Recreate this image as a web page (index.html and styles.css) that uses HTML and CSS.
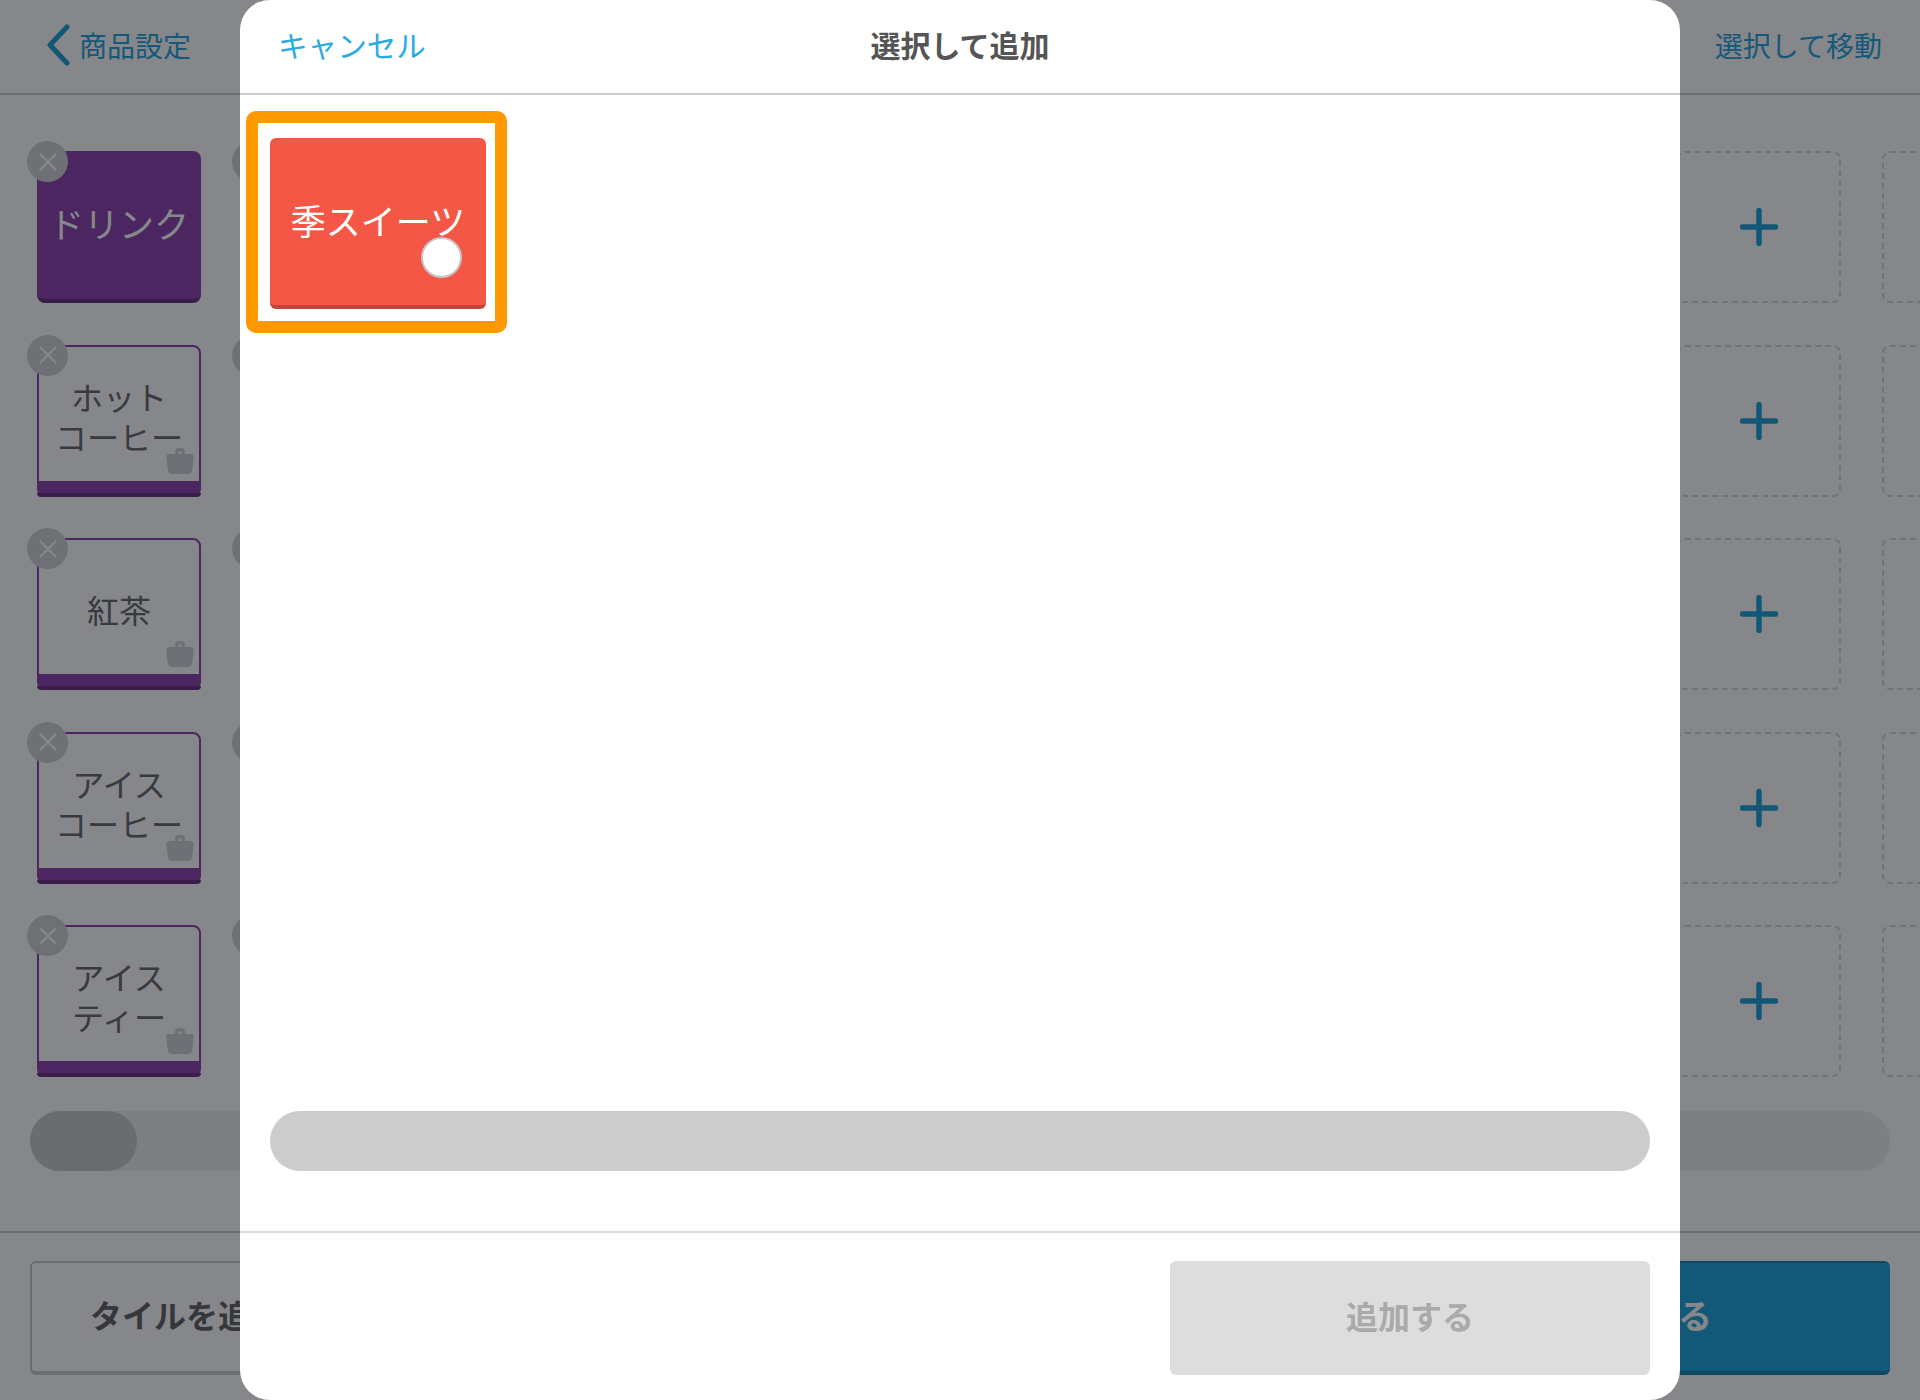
FILE: index.html
```html
<!DOCTYPE html>
<html lang="ja">
<head>
<meta charset="utf-8">
<title>選択して追加</title>
<link rel="stylesheet" href="styles.css">
</head>
<body>
<svg class="defs" width="0" height="0" aria-hidden="true">
  <symbol id="bag" viewBox="0 0 28 28">
    <path fill-rule="evenodd" d="M9 8V6a4 4 0 0 1 4-4h2a4 4 0 0 1 4 4v2h6.2c1.5 0 2.6 1.2 2.5 2.700L26.300 24c-.2 2.300-1.800 4-4.100 4H5.800c-2.300 0-3.900-1.700-4.100-4L.3 10.700C.2 9.200 1.300 8 2.800 8H9Zm3.300 0h3.400V6.500c0-.6-.4-1-1-1h-1.400c-.6 0-1 .4-1 1V8Z"/>
  </symbol>
  <symbol id="cross" viewBox="0 0 20 20">
    <path d="M2.500 2.500l15 15M17.500 2.500l-15 15" fill="none" stroke="currentColor" stroke-width="2.200" stroke-linecap="round"/>
  </symbol>
  <symbol id="plus" viewBox="0 0 38 38">
    <path d="M19 2.500v33M2.500 19h33" fill="none" stroke="currentColor" stroke-width="5.500" stroke-linecap="round"/>
  </symbol>
</svg>

<div class="app">
  <header class="top-bar">
    <a class="back">
      <svg class="chevron" viewBox="0 0 24 42"><path d="M21 3 4 21l17 18" fill="none" stroke="currentColor" stroke-width="5" stroke-linecap="round" stroke-linejoin="round"/></svg>
      <span>商品設定</span>
    </a>
    <a class="top-action">選択して移動</a>
  </header>

  <main class="tile-area">
    <div class="tile-row">
      <div class="tile tile-solid"><button class="delete"><svg class="x"><use href="#cross"/></svg></button><span class="label-large">ドリンク</span></div>
      <div class="tile"><button class="delete"><svg class="x"><use href="#cross"/></svg></button></div>
      <div class="slot"></div><div class="slot"></div><div class="slot"></div><div class="slot"></div><div class="slot"></div><div class="slot"></div>
      <div class="slot"><svg class="plus"><use href="#plus"/></svg></div>
      <div class="slot"><svg class="plus"><use href="#plus"/></svg></div>
    </div>
    <div class="tile-row">
      <div class="tile tile-outline"><button class="delete"><svg class="x"><use href="#cross"/></svg></button><span class="label">ホット<br>コーヒー</span><svg class="bag"><use href="#bag"/></svg></div>
      <div class="tile"><button class="delete"><svg class="x"><use href="#cross"/></svg></button></div>
      <div class="slot"></div><div class="slot"></div><div class="slot"></div><div class="slot"></div><div class="slot"></div><div class="slot"></div>
      <div class="slot"><svg class="plus"><use href="#plus"/></svg></div>
      <div class="slot"><svg class="plus"><use href="#plus"/></svg></div>
    </div>
    <div class="tile-row">
      <div class="tile tile-outline"><button class="delete"><svg class="x"><use href="#cross"/></svg></button><span class="label">紅茶</span><svg class="bag"><use href="#bag"/></svg></div>
      <div class="tile"><button class="delete"><svg class="x"><use href="#cross"/></svg></button></div>
      <div class="slot"></div><div class="slot"></div><div class="slot"></div><div class="slot"></div><div class="slot"></div><div class="slot"></div>
      <div class="slot"><svg class="plus"><use href="#plus"/></svg></div>
      <div class="slot"><svg class="plus"><use href="#plus"/></svg></div>
    </div>
    <div class="tile-row">
      <div class="tile tile-outline"><button class="delete"><svg class="x"><use href="#cross"/></svg></button><span class="label">アイス<br>コーヒー</span><svg class="bag"><use href="#bag"/></svg></div>
      <div class="tile"><button class="delete"><svg class="x"><use href="#cross"/></svg></button></div>
      <div class="slot"></div><div class="slot"></div><div class="slot"></div><div class="slot"></div><div class="slot"></div><div class="slot"></div>
      <div class="slot"><svg class="plus"><use href="#plus"/></svg></div>
      <div class="slot"><svg class="plus"><use href="#plus"/></svg></div>
    </div>
    <div class="tile-row">
      <div class="tile tile-outline"><button class="delete"><svg class="x"><use href="#cross"/></svg></button><span class="label">アイス<br>ティー</span><svg class="bag"><use href="#bag"/></svg></div>
      <div class="tile"><button class="delete"><svg class="x"><use href="#cross"/></svg></button></div>
      <div class="slot"></div><div class="slot"></div><div class="slot"></div><div class="slot"></div><div class="slot"></div><div class="slot"></div>
      <div class="slot"><svg class="plus"><use href="#plus"/></svg></div>
      <div class="slot"><svg class="plus"><use href="#plus"/></svg></div>
    </div>
  </main>

  <div class="page-scroll"><div class="page-thumb"></div></div>

  <footer class="page-footer">
    <button class="btn-outline">タイルを追加</button>
    <button class="btn-primary">保存する</button>
  </footer>

  <div class="overlay"></div>

  <section class="modal">
    <header class="modal-head">
      <a class="cancel">キャンセル</a>
      <h1 class="modal-title">選択して追加</h1>
    </header>
    <div class="modal-body">
      <div class="highlight">
        <div class="pick-tile">
          <span class="label-large">季スイーツ</span>
          <span class="radio"></span>
        </div>
      </div>
    </div>
    <div class="modal-scroll"></div>
    <footer class="modal-foot">
      <button class="btn-disabled">追加する</button>
    </footer>
  </section>
</div>
</body>
</html>
```
FILE: styles.css
```css
* { box-sizing: border-box; }

html, body {
  margin: 0;
  padding: 0;
  background: #fff;
}

body {
  font-family: "Noto Sans CJK JP", "Noto Sans", sans-serif;
  font-weight: 400;
  color: #666;
}

.defs { position: absolute; }

button {
  font-family: inherit;
  margin: 0;
  padding: 0;
}

.app {
  position: relative;
  width: 1920px;
  height: 1400px;
  overflow: hidden;
  background: #fff;
  display: flex;
  flex-direction: column;
}

/* page behind the dialog */
.top-bar {
  flex: none;
  height: 95px;
  border-bottom: 2px solid #ccc;
  display: flex;
  align-items: center;
  justify-content: space-between;
  padding: 0 38px 4px 46px;
  color: #2aa6dc;
  font-size: 28px;
}

.back {
  display: flex;
  align-items: center;
  gap: 9px;
}

.chevron {
  width: 24px;
  height: 42px;
  color: #22a3d9;
}

.tile-area {
  flex: none;
  padding: 56px 0 0 37px;
  display: flex;
  flex-direction: column;
  gap: 41.5px;
}

.tile-row {
  display: flex;
  gap: 41px;
}

.tile, .slot {
  flex: none;
  width: 164px;
  height: 152px;
  border-radius: 8px;
  position: relative;
  display: flex;
  align-items: center;
  justify-content: center;
  text-align: center;
}

.slot {
  border: 2px dashed #d8d8da;
  color: #24a3d9;
}

.tile {
  padding-bottom: 4px;
}

.tile-solid {
  background: #8e46ae;
  border-bottom: 4px solid #6f3589;
  color: #fff;
}

.tile-outline {
  border: 2px solid #8e46ae;
  border-bottom: 16px solid #8e46ae;
  padding: 4px 0 0;
}

.tile-outline::after {
  content: "";
  position: absolute;
  left: -2px;
  right: -2px;
  bottom: -16px;
  height: 4px;
  background: #6f3589;
  border-radius: 0 0 8px 8px;
}

.label {
  font-size: 32px;
  line-height: 40px;
  white-space: nowrap;
  color: #6a6b6f;
}

.label-large {
  font-size: 35px;
  line-height: 40px;
  white-space: nowrap;
}

.delete {
  position: absolute;
  left: -10px;
  top: -10px;
  width: 41px;
  height: 41px;
  border: 0;
  border-radius: 50%;
  background: #d4d4d6;
  color: #fff;
  display: flex;
  align-items: center;
  justify-content: center;
}

.tile-outline .delete {
  left: -12px;
  top: -12px;
}

.x {
  width: 20px;
  height: 20px;
}

.plus {
  width: 38px;
  height: 38px;
}

.bag {
  position: absolute;
  right: 5px;
  bottom: 7px;
  width: 28px;
  height: 28px;
  fill: #d4d4d6;
}

.page-scroll {
  flex: none;
  margin: 34px 30px 0;
  height: 60px;
  border-radius: 30px;
  background: #efeff0;
}

.page-thumb {
  width: 107px;
  height: 60px;
  border-radius: 30px;
  background: #ccc;
}

.page-footer {
  flex: none;
  margin-top: 60px;
  border-top: 2px solid #ccc;
  padding: 28px 30px 0;
  display: flex;
  justify-content: space-between;
}

.btn-outline, .btn-primary {
  height: 114px;
  border-radius: 6px;
  font-size: 32px;
  font-weight: 700;
  display: flex;
  align-items: center;
  justify-content: center;
  padding-bottom: 6px;
}

.btn-outline {
  width: 312px;
  background: #fff;
  color: #666;
  border: 2px solid #ccc;
  border-bottom-width: 4px;
}

.btn-primary {
  width: 492px;
  background: #23a5dc;
  color: #fff;
  border: 0;
  border-top: 2px solid #1a87b5;
  border-bottom: 4px solid #1a87b5;
  font-size: 34px;
}

.overlay {
  position: absolute;
  inset: 0;
  background: rgba(3, 5, 11, 0.48);
}

/* dialog */
.modal {
  position: absolute;
  left: 240px;
  top: 0;
  width: 1440px;
  height: 1400px;
  background: #fff;
  border-radius: 30px;
  display: flex;
  flex-direction: column;
  overflow: hidden;
}

.modal-head {
  flex: none;
  height: 95px;
  border-bottom: 2px solid #ccc;
  display: flex;
  align-items: center;
  justify-content: center;
  position: relative;
  padding-bottom: 5px;
}

.cancel {
  position: absolute;
  left: 38px;
  top: 22px;
  line-height: 46px;
  font-size: 29.600px;
  color: #29abe2;
}

.modal-title {
  margin: 0;
  font-size: 30px;
  font-weight: 700;
  color: #555;
  line-height: 46px;
}

.modal-body {
  flex: 1;
  padding: 16px 0 0 6px;
}

.highlight {
  width: 261px;
  height: 222px;
  border: 12px solid #f90;
  border-radius: 10px;
  padding: 15px 9px 12px 12px;
}

.pick-tile {
  position: relative;
  height: 100%;
  background: #f55746;
  border-bottom: 4px solid #c0463a;
  border-radius: 6px;
  color: #fff;
  display: flex;
  align-items: center;
  justify-content: center;
  padding-bottom: 3px;
}

.radio {
  position: absolute;
  right: 24px;
  bottom: 27px;
  width: 41px;
  height: 41px;
  border-radius: 50%;
  background: #fff;
  border: 2px solid #c6c6c6;
}

.modal-scroll {
  flex: none;
  margin: 0 30px;
  height: 60px;
  border-radius: 30px;
  background: #ccc;
}

.modal-foot {
  flex: none;
  margin-top: 60px;
  border-top: 2px solid #d9d9d9;
  padding: 28px 30px 25px;
  display: flex;
  justify-content: flex-end;
}

.btn-disabled {
  width: 480px;
  height: 114px;
  background: #ddd;
  border: 0;
  border-radius: 6px;
  color: #aaa;
  font-size: 32px;
  font-weight: 700;
  padding-bottom: 6px;
}
```
